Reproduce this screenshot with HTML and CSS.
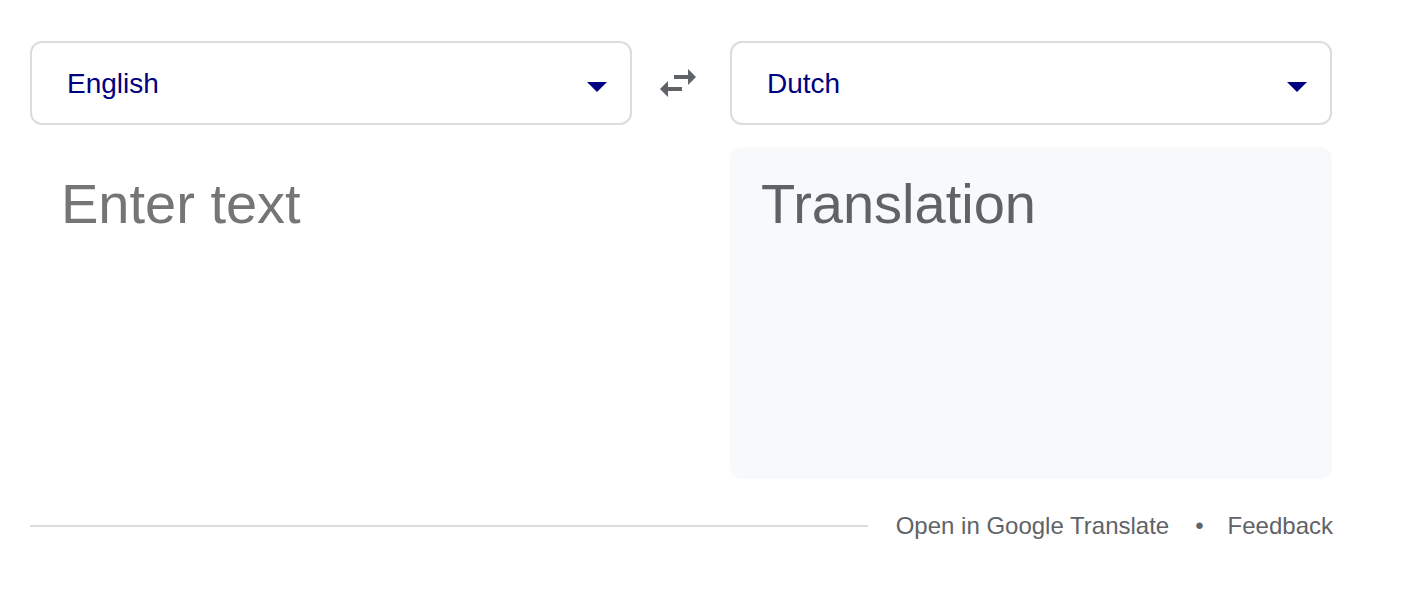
FILE: index.html
```html
<!DOCTYPE html>
<html>
<head>
<meta charset="utf-8">
<link rel="stylesheet" href="styles.css">
</head>
<body>
<div class="translator">
  <div class="row top">
    <div class="select">
      <span class="lang">English</span>
      <span class="caret"></span>
    </div>
    <div class="swap">
      <svg width="48" height="48" viewBox="0 0 24 24"><path fill="#5f6368" d="M6.99 11L3 15l3.99 4v-3H14v-2H6.99v-3zM21 9l-3.99-4v3H10v2h7.01v3L21 9z"/></svg>
    </div>
    <div class="select">
      <span class="lang">Dutch</span>
      <span class="caret"></span>
    </div>
  </div>
  <div class="row panes">
    <div class="pane source">Enter text</div>
    <div class="spacer"></div>
    <div class="pane target">Translation</div>
  </div>
  <div class="footer">
    <div class="rule"></div>
    <a class="link">Open in Google Translate</a>
    <span class="dot">•</span>
    <a class="link">Feedback</a>
  </div>
</div>
</body>
</html>
```
FILE: styles.css
```css
html, body {
  margin: 0;
  padding: 0;
  background: #fff;
}
body {
  font-family: "Liberation Sans", Arial, sans-serif;
}
.translator {
  width: 1302px;
  padding: 41px 0 0 30px;
}
.row {
  display: grid;
  grid-template-columns: 602px 98px 602px;
}
.select {
  box-sizing: border-box;
  height: 84px;
  border: 2px solid #dadce0;
  border-radius: 12px;
  display: flex;
  align-items: center;
  justify-content: space-between;
  padding: 2px 23px 0 35px;
}
.lang {
  font-size: 28px;
  line-height: 32px;
  color: #000080;
}
.caret {
  width: 0;
  height: 0;
  border-left: 10px solid transparent;
  border-right: 10px solid transparent;
  border-top: 10px solid #000080;
  margin-top: 5px;
}
.swap {
  display: flex;
  align-items: center;
  padding-left: 22px;
}
.swap svg {
  display: block;
}
.panes {
  margin-top: 22px;
}
.pane {
  box-sizing: border-box;
  height: 332px;
  border-radius: 12px;
  font-size: 56px;
  line-height: 64px;
  padding-top: 25px;
}
.source {
  color: #757575;
  padding-left: 31px;
}
.target {
  background: #f8f9fa;
  color: #5f6368;
  padding-left: 31px;
}
.footer {
  display: flex;
  align-items: center;
  margin-top: 33px;
  height: 28px;
  white-space: nowrap;
}
.rule {
  flex: 1;
  height: 2px;
  background: #dadce0;
  margin-right: 28px;
}
.link {
  flex-shrink: 0;
  font-size: 24px;
  line-height: 28px;
  color: #5f6368;
}
.dot {
  flex-shrink: 0;
  font-size: 24px;
  line-height: 28px;
  color: #5f6368;
  margin: 0 24px 0 26px;
}
.footer .link:last-child {
  margin-right: -1px;
}
```
